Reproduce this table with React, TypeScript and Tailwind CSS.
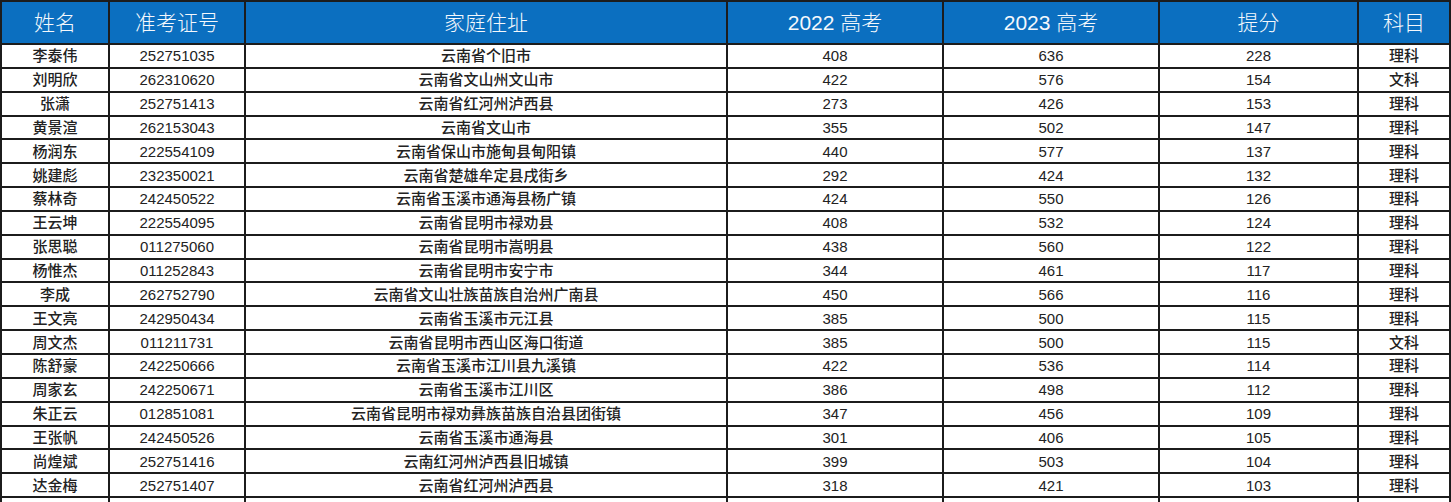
const COLS = [
  { label: "姓名", w: "w-[108px]" },
  { label: "准考证号", w: "w-[136px]" },
  { label: "家庭住址", w: "w-[482px]" },
  { label: "2022 高考", w: "w-[216px]" },
  { label: "2023 高考", w: "w-[216px]" },
  { label: "提分", w: "w-[199px]" },
  { label: "科目", w: "flex-1" },
];

const ROWS: string[][] = [
  ["李泰伟", "252751035", "云南省个旧市", "408", "636", "228", "理科"],
  ["刘明欣", "262310620", "云南省文山州文山市", "422", "576", "154", "文科"],
  ["张潇", "252751413", "云南省红河州泸西县", "273", "426", "153", "理科"],
  ["黄景渲", "262153043", "云南省文山市", "355", "502", "147", "理科"],
  ["杨润东", "222554109", "云南省保山市施甸县甸阳镇", "440", "577", "137", "理科"],
  ["姚建彪", "232350021", "云南省楚雄牟定县戌街乡", "292", "424", "132", "理科"],
  ["蔡林奇", "242450522", "云南省玉溪市通海县杨广镇", "424", "550", "126", "理科"],
  ["王云坤", "222554095", "云南省昆明市禄劝县", "408", "532", "124", "理科"],
  ["张思聪", "011275060", "云南省昆明市嵩明县", "438", "560", "122", "理科"],
  ["杨惟杰", "011252843", "云南省昆明市安宁市", "344", "461", "117", "理科"],
  ["李成", "262752790", "云南省文山壮族苗族自治州广南县", "450", "566", "116", "理科"],
  ["王文亮", "242950434", "云南省玉溪市元江县", "385", "500", "115", "理科"],
  ["周文杰", "011211731", "云南省昆明市西山区海口街道", "385", "500", "115", "文科"],
  ["陈舒豪", "242250666", "云南省玉溪市江川县九溪镇", "422", "536", "114", "理科"],
  ["周家玄", "242250671", "云南省玉溪市江川区", "386", "498", "112", "理科"],
  ["朱正云", "012851081", "云南省昆明市禄劝彝族苗族自治县团街镇", "347", "456", "109", "理科"],
  ["王张帆", "242450526", "云南省玉溪市通海县", "301", "406", "105", "理科"],
  ["尚煌斌", "252751416", "云南红河州泸西县旧城镇", "399", "503", "104", "理科"],
  ["达金梅", "252751407", "云南省红河州泸西县", "318", "421", "103", "理科"],
  ["", "", "", "", "", "", ""],
];

const FONT = "font-['Liberation_Sans','Noto_Sans_CJK_SC',sans-serif]";

export default function App() {
  return (
    <div className={`w-[1451px] h-[502px] overflow-hidden bg-white ${FONT}`}>
      <div className="flex flex-col border-2 border-b-0 border-[#1c1c1c]">
        {/* Header */}
        <div className="flex h-[43px] bg-[#0b6fc0] border-b-2 border-[#1c1c1c]">
          {COLS.map((c, i) => (
            <div
              key={c.label}
              className={`${c.w} shrink-0 flex items-center justify-center text-[#f4f8fc] text-[21px] font-light ${
                i < COLS.length - 1 ? "border-r-2 border-[#1c1c1c]" : ""
              }`}
            >
              {c.label}
            </div>
          ))}
        </div>

        {/* Rows */}
        {ROWS.map((r, ri) => (
          <div key={ri} className="flex h-[23.85px] shrink-0 border-b-2 border-[#1c1c1c]">
            {r.map((v, i) => (
              <div
                key={i}
                className={`${COLS[i].w} shrink-0 flex items-center justify-center text-[15px] leading-none text-[#222] ${
                  i === 0 || i === 2 || i === 6 ? "font-medium" : "font-normal"
                } ${i < COLS.length - 1 ? "border-r-2 border-[#1c1c1c]" : ""}`}
              >
                {v}
              </div>
            ))}
          </div>
        ))}
      </div>
    </div>
  );
}
